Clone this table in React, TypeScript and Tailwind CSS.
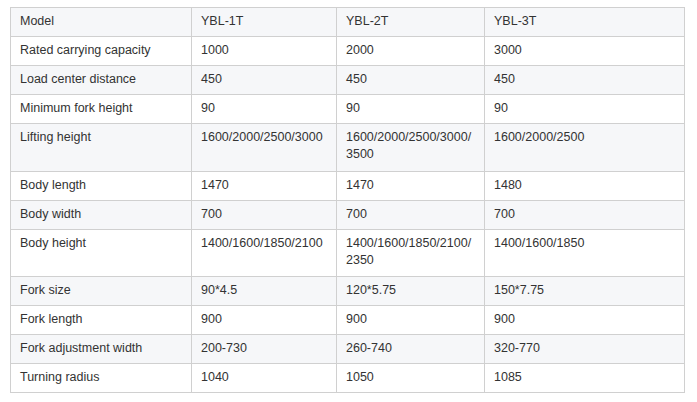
const rows: string[][] = [
  ["Model", "YBL-1T", "YBL-2T", "YBL-3T"],
  ["Rated carrying capacity", "1000", "2000", "3000"],
  ["Load center distance", "450", "450", "450"],
  ["Minimum fork height", "90", "90", "90"],
  ["Lifting height", "1600/2000/2500/3000", "1600/2000/2500/3000/3500", "1600/2000/2500"],
  ["Body length", "1470", "1470", "1480"],
  ["Body width", "700", "700", "700"],
  ["Body height", "1400/1600/1850/2100", "1400/1600/1850/2100/2350", "1400/1600/1850"],
  ["Fork size", "90*4.5", "120*5.75", "150*7.75"],
  ["Fork length", "900", "900", "900"],
  ["Fork adjustment width", "200-730", "260-740", "320-770"],
  ["Turning radius", "1040", "1050", "1085"],
];

export default function App() {
  return (
    <div className="h-[402px] w-[697px] bg-white pl-[10px] pt-[7px] font-['Liberation_Sans',Arial,sans-serif] text-[12.5px] leading-[17px] text-[#333]">
      <table className="w-[674px] table-fixed border-collapse">
        <colgroup>
          <col className="w-[181px]" />
          <col className="w-[145px]" />
          <col className="w-[148px]" />
          <col className="w-[200px]" />
        </colgroup>
        <tbody>
          {rows.map((row, i) => {
            const tall = row[2].length > 20;
            return (
              <tr key={i} className={i % 2 === 0 ? "bg-[#f6f7f9]" : "bg-white"}>
                {row.map((cell, j) => (
                  <td
                    key={j}
                    className={
                      "break-words border border-[#d0d0d0] px-[9px] pt-[5px] align-top " +
                      (tall ? "pb-[7.5px]" : "pb-[6px]")
                    }
                  >
                    {cell}
                  </td>
                ))}
              </tr>
            );
          })}
        </tbody>
      </table>
    </div>
  );
}
